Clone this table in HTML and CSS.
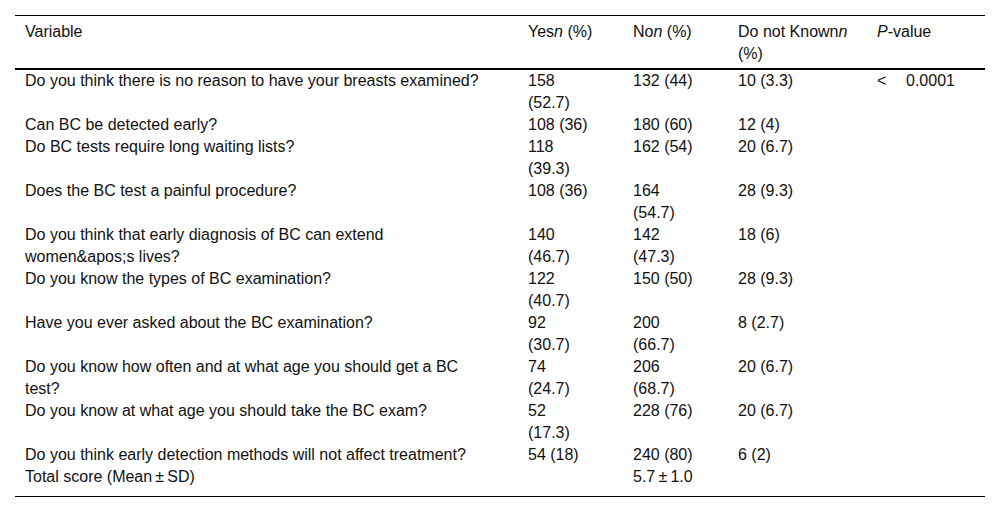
FILE: index.html
```html
<!DOCTYPE html>
<html lang="en">
<head>
<meta charset="utf-8">
<title>Table</title>
<link rel="stylesheet" href="styles.css">
</head>
<body>
<div class="wrap">
<table class="data">
  <thead>
    <tr>
      <th class="c-var">Variable</th>
      <th class="c-num">Yes<i>n</i> (%)</th>
      <th class="c-num">No<i>n</i> (%)</th>
      <th class="c-dk">Do not Known<i>n</i> (%)</th>
      <th class="c-p"><i>P</i>-value</th>
    </tr>
  </thead>
  <tbody>
    <tr>
      <td class="c-var">Do you think there is no reason to have your breasts examined?</td>
      <td class="c-num">158 (52.7)</td>
      <td class="c-num">132 (44)</td>
      <td class="c-dk">10 (3.3)</td>
      <td class="c-p"><span class="lt">&lt;</span>0.0001</td>
    </tr>
    <tr>
      <td class="c-var">Can BC be detected early?</td>
      <td class="c-num">108 (36)</td>
      <td class="c-num">180 (60)</td>
      <td class="c-dk">12 (4)</td>
      <td class="c-p"></td>
    </tr>
    <tr>
      <td class="c-var">Do BC tests require long waiting lists?</td>
      <td class="c-num">118 (39.3)</td>
      <td class="c-num">162 (54)</td>
      <td class="c-dk">20 (6.7)</td>
      <td class="c-p"></td>
    </tr>
    <tr>
      <td class="c-var">Does the BC test a painful procedure?</td>
      <td class="c-num">108 (36)</td>
      <td class="c-num">164 (54.7)</td>
      <td class="c-dk">28 (9.3)</td>
      <td class="c-p"></td>
    </tr>
    <tr>
      <td class="c-var">Do you think that early diagnosis of BC can extend women&amp;apos;s lives?</td>
      <td class="c-num">140 (46.7)</td>
      <td class="c-num">142 (47.3)</td>
      <td class="c-dk">18 (6)</td>
      <td class="c-p"></td>
    </tr>
    <tr>
      <td class="c-var">Do you know the types of BC examination?</td>
      <td class="c-num">122 (40.7)</td>
      <td class="c-num">150 (50)</td>
      <td class="c-dk">28 (9.3)</td>
      <td class="c-p"></td>
    </tr>
    <tr>
      <td class="c-var">Have you ever asked about the BC examination?</td>
      <td class="c-num">92 (30.7)</td>
      <td class="c-num">200 (66.7)</td>
      <td class="c-dk">8 (2.7)</td>
      <td class="c-p"></td>
    </tr>
    <tr>
      <td class="c-var">Do you know how often and at what age you should get a BC test?</td>
      <td class="c-num">74 (24.7)</td>
      <td class="c-num">206 (68.7)</td>
      <td class="c-dk">20 (6.7)</td>
      <td class="c-p"></td>
    </tr>
    <tr>
      <td class="c-var">Do you know at what age you should take the BC exam?</td>
      <td class="c-num">52 (17.3)</td>
      <td class="c-num">228 (76)</td>
      <td class="c-dk">20 (6.7)</td>
      <td class="c-p"></td>
    </tr>
    <tr>
      <td class="c-var">Do you think early detection methods will not affect treatment?</td>
      <td class="c-num">54 (18)</td>
      <td class="c-num">240 (80)</td>
      <td class="c-dk">6 (2)</td>
      <td class="c-p"></td>
    </tr>
    <tr class="last">
      <td class="c-var">Total score (Mean&#8201;±&#8201;SD)</td>
      <td class="c-num"></td>
      <td class="c-num">5.7&#8201;±&#8201;1.0</td>
      <td class="c-dk"></td>
      <td class="c-p"></td>
    </tr>
  </tbody>
</table>
</div>
</body>
</html>
```

FILE: styles.css
```css
html, body {
  margin: 0;
  background: #ffffff;
}

body {
  font-family: "Liberation Sans", Arial, Helvetica, sans-serif;
  font-size: 16px;
  line-height: 22px;
  color: #111111;
}

.wrap {
  padding: 15px 15px 0 15px;
}

.data {
  width: 970px;
  border-collapse: collapse;
  table-layout: fixed;
  border-top: 1px solid #000000;
  border-bottom: 1px solid #000000;
}

.data th,
.data td {
  box-sizing: border-box;
  text-align: left;
  vertical-align: top;
  font-weight: normal;
}

.data th {
  padding-top: 5px;
  padding-bottom: 3px;
  padding-left: 10px;
  border-bottom: 2px solid #000000;
}

.data td {
  padding-top: 0;
  padding-bottom: 0;
  padding-left: 10px;
}

.data .last td {
  padding-bottom: 8px;
}

.c-var {
  width: 503px;
  padding-right: 31px;
}

.c-num {
  width: 105px;
  padding-right: 33px;
}

.data th.c-num {
  padding-right: 27px;
}

.c-dk {
  width: 139px;
  padding-right: 9px;
}

.c-p {
  width: 118px;
  padding-right: 0;
}

.lt {
  display: inline-block;
  width: 29px;
}
```
